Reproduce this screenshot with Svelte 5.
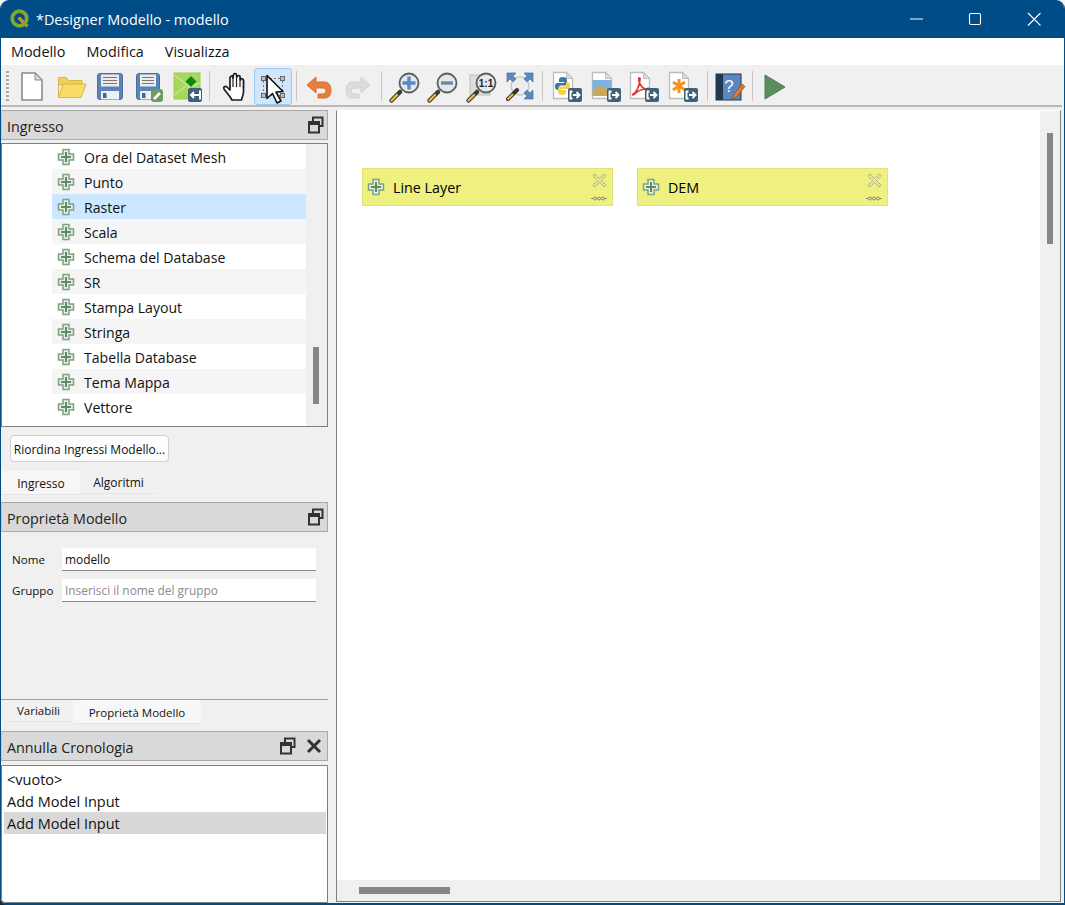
<script>
  const inputs = ['Ora del Dataset Mesh','Punto','Raster','Scala','Schema del Database','SR','Stampa Layout','Stringa','Tabella Database','Tema Mappa','Vettore'];
  const nodes = [{ name: 'Line Layer', cls: 'n1' }, { name: 'DEM', cls: 'n2' }];
</script>

{#snippet plus()}
  <svg class="plus" viewBox="0 0 18 18"><path d="M6 1.500h6v4.500h4.500v6H12v4.500H6V12H1.500V6H6z" fill="#e6eee6" stroke="#7fa283" stroke-width="1.500"/><path d="M8 4h2v4h4v2h-4v4H8v-4H4V8h4z" fill="#5b8c66"/></svg>
{/snippet}

{#snippet undock()}
  <svg class="undock" viewBox="0 0 16 18"><path d="M5 5V1.500h9.500V10H11" fill="none" stroke="#333" stroke-width="2"/><rect x="1" y="6" width="10" height="10.500" fill="none" stroke="#333" stroke-width="2"/><path d="M1 8h10" stroke="#333" stroke-width="2"/></svg>
{/snippet}

{#snippet badge()}
  <rect x="16" y="17" width="14" height="14" rx="2" fill="#3f6079"/>
  <path d="M20.500 20.500h-2v7h2M21 24h6M24.500 21l3 3-3 3" fill="none" stroke="#fff" stroke-width="1.900"/>
{/snippet}

{#snippet page()}
  <path d="M1.500 1.500h13l6 6v20h-19z" fill="#fff" stroke="#bdbdbd" stroke-width="1.300"/><path d="M14.500 1.500v6h6z" fill="#ddd" stroke="#bdbdbd"/>
{/snippet}

{#snippet disk(w)}
  <rect x="4.500" y="2.500" width={w} height="26" rx="2.500" fill="#5b84b8" stroke="#4d6f9c"/>
  <rect x="8" y="3.500" width={w - 7} height="12" fill="#ececec"/>
  <path d="M10 6.500h{w - 11}M10 9.500h{w - 11}M10 12.500h{w - 11}" stroke="#777"/>
  <rect x="8" y="20" width={w - 7} height="8.500" fill="#eef0f2"/>
  <rect x="10" y="22" width="3.500" height="5" fill="#3f6797"/>
{/snippet}

{#snippet lens(inner)}
  <path d="M12 21L3.500 29.500" stroke="#3a3a3a" stroke-width="4.500" stroke-linecap="round"/>
  <path d="M9 24L3.500 29.500" stroke="#e7bf3a" stroke-width="2.300" stroke-linecap="round"/>
  <circle cx="21" cy="12" r="9.500" fill="#e3e8ee" stroke="#5d5d5d" stroke-width="1.800"/>
  {@render inner()}
{/snippet}

{#snippet inPlus()}<path d="M21 5.500v13M14.500 12h13" stroke="#5a88c2" stroke-width="3.400"/>{/snippet}
{#snippet inMinus()}<path d="M15 12h12" stroke="#74879b" stroke-width="3.400"/>{/snippet}
{#snippet inOne()}<text x="21" y="16" class="one">1:1</text>{/snippet}

<div class="window">
  <header class="title">
    <svg class="logo" viewBox="0 0 20 20"><circle cx="9.500" cy="9.500" r="7.300" fill="none" stroke="#80a92a" stroke-width="3.800"/><path d="M9 9l8.500 8.500" stroke="#80a92a" stroke-width="3.400"/><path d="M8.500 8.500l4.500 4.500" stroke="#ee7a22" stroke-width="2.600"/></svg>
    <span class="title-text">*Designer Modello - modello</span>
    <div class="win-btns">
      <svg viewBox="0 0 59 14"><path d="M23 7h13" stroke="#fff"/></svg>
      <svg viewBox="0 0 59 14"><rect x="23.500" y="1.500" width="11" height="11" rx="1.500" fill="none" stroke="#fff" stroke-width="1.100"/></svg>
      <svg viewBox="0 0 59 14"><path d="M23 1l12.500 12.500M35.500 1L23 13.500" stroke="#fff" stroke-width="1.100"/></svg>
    </div>
  </header>

  <nav class="menu"><span>Modello</span><span>Modifica</span><span>Visualizza</span></nav>

  <div class="toolbar">
    <div class="grip"></div>
    <div class="tb"><svg viewBox="0 0 32 32"><path d="M6 2h13l7 7v20H6z" fill="#fff" stroke="#8b8b8b" stroke-width="1.600"/><path d="M19 2v7h7z" fill="#d8d8d8" stroke="#8b8b8b"/></svg></div>
    <div class="tb"><svg viewBox="0 0 32 32"><path d="M3.500 26V6.500H11l2.500 3H27V14H3.500z" fill="#f4cf58" stroke="#d9b64a"/><path d="M3.500 26.500L8 13h23l-5 13.500z" fill="#fadc68" stroke="#d9b64a"/></svg></div>
    <div class="tb"><svg viewBox="0 0 32 32">{@render disk(25)}</svg></div>
    <div class="tb"><svg viewBox="0 0 32 32">{@render disk(23)}<rect x="19" y="18" width="12" height="13" rx="3" fill="#6d9a5f"/><path d="M22 28l6-6" stroke="#fff" stroke-width="2.600"/></svg></div>
    <div class="tb"><svg viewBox="0 0 32 32"><rect x="3" y="2" width="26" height="26" fill="#a6d85c" stroke="#9bc956"/><path d="M3 4l16 12 10-4M3 24l12-9M17 15l3 13" stroke="#d9efb5" fill="none"/><path d="M20 5l5.500 5.500L20 16l-5.500-5.500z" fill="#0a8a10"/><rect x="17" y="17" width="14" height="14" rx="2" fill="#3f6079"/><path d="M28 20.500h1v7h-1M28 24h-8M23 21l-3 3 3 3" fill="none" stroke="#fff" stroke-width="1.900"/></svg></div>
    <div class="sep s1"></div>
    <div class="tb"><svg viewBox="0 0 32 32"><path d="M14 29c-2-4-6-8-8-11-1-2 1-3.500 3-2l3 3V7c0-2.500 3-2.500 3 0l.5-3c0-2 3-2 3 0l.500 2c.5-2 3-2 3 0l.5 3c.5-2 3-1.500 3 .5V21c0 3-1.500 5-2 8z" fill="#fff" stroke="#1c1c1c" stroke-width="1.700" stroke-linejoin="round"/><path d="M15 7v9M18.500 5v11M22 7v9M25.500 9v8" stroke="#1c1c1c" stroke-width="1.200"/></svg></div>
    <div class="tb on"><svg viewBox="0 0 32 32"><g fill="#bfbfbf" stroke="#666"><rect x="4.500" y="5.500" width="4" height="4"/><rect x="23.500" y="5.500" width="4" height="4"/><rect x="4.500" y="22.500" width="4" height="4"/><rect x="23.500" y="22.500" width="4" height="4"/></g><path d="M9 7.500h14M6.500 10v12M25.500 10v12M9 24.500h14" stroke="#777" stroke-dasharray="2 2"/><path d="M10 4.500l16 16-7 .5 5 9-4 2-4.500-9.500-5.500 5z" fill="#fff" stroke="#111" stroke-width="1.600" stroke-linejoin="round"/></svg></div>
    <div class="sep"></div>
    <div class="tb"><svg viewBox="0 0 32 32"><path d="M13 6l-9 8 9 8v-5h7c2 0 3 1.500 3 3s-1.500 3-3 3h-5v4h7c4 0 6-3 6-7.500S26 11 22 11h-9z" fill="#e77f3c" stroke="#d8702f"/></svg></div>
    <div class="tb"><svg viewBox="0 0 32 32"><path d="M19 6l9 8-9 8v-5h-7c-2 0-3 1.500-3 3s1.500 3 3 3h5v4h-7c-4 0-6-3-6-7.500S6 11 10 11h9z" fill="#dcdcdc" stroke="#d0d0d0"/></svg></div>
    <div class="sep s3"></div>
    <div class="tb"><svg viewBox="0 0 32 32">{@render lens(inPlus)}</svg></div>
    <div class="tb"><svg viewBox="0 0 32 32">{@render lens(inMinus)}</svg></div>
    <div class="tb"><svg viewBox="0 0 32 32"><rect x="5" y="4" width="20" height="20" fill="#ddd" stroke="#bbb"/>{@render lens(inOne)}</svg></div>
    <div class="tb"><svg viewBox="0 0 32 32"><circle cx="17" cy="15" r="9" fill="#ececec" stroke="#c8c8c8" stroke-width="1.500"/><path d="M14 19L5 28" stroke="#333" stroke-width="4" stroke-linecap="round"/><path d="M10 23L4.500 28.500" stroke="#e7bf3a" stroke-width="2.200"/><g fill="#5b8ac0" stroke="#44709f" stroke-width=".7"><path d="M4 2h9l-3 3 3 3-3 3-3-3-3 3z"/><path d="M30 2h-9l3 3-3 3 3 3 3-3 3 3z"/><path d="M30 28h-9l3-3-3-3 3-3 3 3 3-3z"/></g></svg></div>
    <div class="sep s4"></div>
    <div class="tb"><svg viewBox="0 0 32 32">{@render page()}<path d="M11 6c-3 0-4 1-4 3v2h5v1H5.500c-2 0-2.500 1.500-2.500 3.500S4 19 5.500 19H7v-2.500c0-1.500 1-2 2.500-2h3.500c1 0 2-1 2-2V9c0-2-1.500-3-4-3z" fill="#3c78ac"/><path d="M10 24c3 0 4-1 4-3v-2H9v-1h6.500c2 0 2.500-1.500 2.500-3.500S17 11 15.500 11H14v2.500c0 1.500-1 2-2.500 2H8c-1 0-2 1-2 2V21c0 2 1.500 3 4 3z" fill="#f6cf4b"/>{@render badge()}</svg></div>
    <div class="tb"><svg viewBox="0 0 32 32">{@render page()}<rect x="1.500" y="9" width="19" height="16" fill="#7fb2df"/><path d="M1.500 20l6-5 5 1 8 4v5h-19z" fill="#c9a85a"/>{@render badge()}</svg></div>
    <div class="tb"><svg viewBox="0 0 32 32">{@render page()}<path d="M3 24c4-2 7-8 8-15 .5-3-2-3-1 1 1 5 5 9 10 9 1.500 0 1-2-2-1.500-5 .5-9 2-13 6z" fill="none" stroke="#e0342b" stroke-width="1.700"/>{@render badge()}</svg></div>
    <div class="tb"><svg viewBox="0 0 32 32">{@render page()}<path d="M11 8v14M5 11l12 8M17 11L5 19" stroke="#f7931e" stroke-width="3"/>{@render badge()}</svg></div>
    <div class="sep s3"></div>
    <div class="tb"><svg viewBox="0 0 32 32"><rect x="3" y="3" width="25" height="26" fill="#5c87be" stroke="#22384d"/><rect x="3" y="3" width="7" height="26" fill="#22384d"/><text x="16" y="21" class="q">?</text><path d="M19 29l2-6 8-10 3 2.500-8 10z" fill="#e8762b" stroke="#7a4a22" stroke-width=".7"/></svg></div>
    <div class="sep s3"></div>
    <div class="tb"><svg viewBox="0 0 32 32"><path d="M6 4l20 12L6 28z" fill="#5a8f5b" stroke="#4b7d4c"/></svg></div>
  </div>

  <main class="body">
    <aside class="left">
      <div class="dock first"><span>Ingresso</span>{@render undock()}</div>
      <div class="tree">
        <div class="tree-rows">
          {#each inputs as item, i}
            <div class="row" class:alt={i % 2 === 1} class:sel={item === 'Raster'}>
              {@render plus()}<span>{item}</span>
            </div>
          {/each}
        </div>
        <div class="vtrack"><div class="tree-thumb"></div></div>
      </div>
      <button class="reorder">Riordina Ingressi Modello...</button>
      <div class="tabs t1">
        <div class="tab active w1">Ingresso</div>
        <div class="tab w2">Algoritmi</div>
      </div>
      <div class="dock second"><span>Proprietà Modello</span>{@render undock()}</div>
      <div class="form">
        <label for="nome">Nome</label><input id="nome" value="modello" />
        <label for="gruppo">Gruppo</label><input id="gruppo" placeholder="Inserisci il nome del gruppo" />
      </div>
      <div class="tabs t2">
        <div class="tab w3">Variabili</div>
        <div class="tab active w4">Proprietà Modello</div>
      </div>
      <div class="dock third"><span>Annulla Cronologia</span>{@render undock()}
        <svg class="closer" viewBox="0 0 16 16"><path d="M2 2l12 12M14 2L2 14" stroke="#333" stroke-width="3"/></svg>
      </div>
      <div class="history">
        <div class="h-row">&lt;vuoto&gt;</div>
        <div class="h-row">Add Model Input</div>
        <div class="h-row cur">Add Model Input</div>
      </div>
    </aside>

    <section class="canvas">
      <div class="paper">
        {#each nodes as n}
          <div class="node {n.cls}">
            {@render plus()}<span>{n.name}</span>
            <svg class="nx" viewBox="0 0 16 16"><path d="M3 1l5 5 5-5 2 2-5 5 5 5-2 2-5-5-5 5-2-2 5-5-5-5z" fill="#e4e6a0" stroke="#8f8f6a" stroke-dasharray="1.500 .8"/></svg>
            <svg class="nd" viewBox="0 0 16 5"><path d="M0 2.500h16" stroke="#8e8e62"/><circle cx="4" cy="2.500" r="1.500" fill="#e4e6a0" stroke="#8e8e62"/><circle cx="8" cy="2.500" r="1.500" fill="#e4e6a0" stroke="#8e8e62"/><circle cx="12" cy="2.500" r="1.500" fill="#e4e6a0" stroke="#8e8e62"/></svg>
          </div>
        {/each}
      </div>
      <div class="vbar"><div class="vthumb"></div></div>
      <div class="hbar"><div class="hthumb"></div></div>
      <div class="cornerbox"></div>
    </section>
  </main>
</div>

<style>
  :global(body) { margin: 0; background: linear-gradient(#f4f4f4 50%, #222 50%); }
  * { box-sizing: border-box; }
  .window {
    width: 1065px; height: 905px; display: flex; flex-direction: column;
    background: #f0f0f0; border: 1px solid #004c87; border-top: 0; border-bottom-width: 2px;
    border-radius: 9px 9px 0 6px; overflow: hidden;
    font-family: "Open Sans", "Noto Sans", sans-serif; font-size: 14px; color: #111;
  }
  .title { height: 38px; background: #004c87; color: #fff; display: flex; align-items: center; padding-left: 9px; flex: none; }
  .logo { width: 20px; height: 20px; flex: none; }
  .title-text { margin-left: 6px; font-size: 14.400px; flex: 1; }
  .win-btns { display: flex; }
  .win-btns svg { width: 59px; height: 14px; display: block; }
  .menu { height: 27px; background: #fff; display: flex; align-items: center; padding-left: 10px; gap: 21px; flex: none; font-size: 14.400px; }
  .toolbar { height: 42px; display: flex; align-items: center; padding: 2px 0 0 5px; border-bottom: 2px solid #b9b9b9; flex: none; margin-right: 2px; }
  .grip { width: 3px; height: 30px; margin-right: 4px; background: repeating-linear-gradient(#a8a8a8 0 2px, transparent 2px 4px); }
  .tb { width: 38.600px; height: 37px; display: flex; align-items: center; justify-content: center; border: 1px solid transparent; border-radius: 3px; padding-top: 1px; }
  .tb svg { width: 32px; height: 32px; overflow: visible; display: block; }
  .tb.on { background: #cfe6fb; border-color: #9cc9ef; }
  .sep { width: 1px; height: 30px; background: #c9c9c9; margin: 0 3.500px; flex: none; }
  .s1 { margin-right: 4.500px; }
  .s3 { margin-right: 2.500px; }
  .s4 { margin-right: 5.500px; }
  .one { font: bold 10px "Liberation Sans", sans-serif; text-anchor: middle; fill: #222; }
  .q { font: 17px "Liberation Sans", sans-serif; text-anchor: middle; fill: #fff; }

  .body { flex: 1; display: flex; min-height: 0; }
  .left { width: 327px; flex: none; display: flex; flex-direction: column; }
  .dock { height: 30px; flex: none; display: flex; align-items: center; padding: 0 3px 0 5px; background: #d9d9d9; border: 1px solid #a9a9a9; border-left-color: #c8c8c8; font-size: 14.300px; color: #222; }
  .dock span { flex: 1; padding-top: 2px; }
  .dock.first { margin-top: 3px; }
  .dock.second { margin-top: 7px; }
  .dock.third { margin-top: 7px; padding-right: 5px; }
  .undock { width: 16px; height: 18px; display: block; }
  .closer { width: 16px; height: 16px; margin-left: 10px; }
  .tree { height: 284px; flex: none; margin-top: 3px; background: #fff; border: 1px solid #808080; display: flex; }
  .tree-rows { flex: 1; padding: 0 0 0 50px; }
  .row { height: 25px; display: flex; align-items: center; padding-left: 5px; font-size: 14.100px; }
  .row span { padding-top: 2px; }
  .row.alt { background: #f5f5f5; }
  .row.sel { background: #cce7ff; }
  .plus { width: 18px; height: 18px; flex: none; margin-right: 9px; }
  .vtrack { width: 21px; background: #f0f0f0; padding: 203px 0 0 7px; }
  .tree-thumb { width: 6px; height: 57px; background: #868686; }
  .reorder { align-self: flex-start; flex: none; margin: 8px 0 0 9px; width: 159px; height: 27px; padding: 1px 0 0; background: #fdfdfd; border: 1px solid #d0d0d0; border-radius: 4px; font: 12px "Open Sans", "Noto Sans", sans-serif; color: #111; }
  .tabs { display: flex; flex: none; }
  .t1 { margin-top: 9px; height: 24px; padding-left: 1px; gap: 1px; align-items: flex-start; font-size: 12px; }
  .t2 { height: 25px; border-top: 1px solid #a0a0a0; padding-left: 3px; align-items: flex-start; font-size: 11.500px; }
  .tab { display: flex; align-items: center; justify-content: center; height: 22px; background: #f1f1f1; border-bottom: 1px solid #e4e4e4; }
  .tab.active { height: 24px; background: #f7f7f7; padding-top: 1px; }
  .w1 { width: 78px; }
  .w2 { width: 75px; margin-top: 1px; }
  .w3 { width: 69px; padding-bottom: 1px; }
  .w4 { width: 128px; }
  .form { flex: 1; display: grid; grid-template-columns: 50px 254px; grid-auto-rows: 23px; row-gap: 8px; padding: 16px 0 0 11px; align-items: center; align-content: start; font-size: 11.600px; }
  .form input { height: 23px; width: 254px; border: 0; border-bottom: 1px solid #8a8a8a; background: #fff; padding: 0 3px; font: 11.900px "Open Sans", "Noto Sans", sans-serif; color: #111; outline: 0; }
  .form input::placeholder { color: #8b8b8b; opacity: 1; }
  .history { margin-top: 4px; height: 138px; flex: none; background: #fff; border: 1px solid #808080; padding: 2px 1px; font-size: 14.500px; border-radius: 0 0 0 4px; }
  .h-row { height: 22px; line-height: 23px; padding-left: 4px; }
  .h-row.cur { background: #d8d8d8; margin-left: 1px; padding-left: 3px; }

  .canvas { position: relative; margin: 3px 3px 1px 8px; flex: 1; display: grid; grid-template-columns: 1fr 20px; grid-template-rows: 1fr 21px; border: 1px solid #808080; border-top: 1px solid #fff; }
  .paper { background: #fff; position: relative; }
  .node { position: absolute; top: 57px; width: 251px; height: 38px; background: #eef080; border: 1px solid #e2e278; display: flex; align-items: center; padding-left: 4px; font-size: 14.300px; color: #000; }
  .n1 { left: 25px; } .n2 { left: 300px; }
  .node .plus { margin-right: 8px; }
  .nx { position: absolute; right: 5px; top: 4px; width: 15px; height: 15px; }
  .nd { position: absolute; right: 5px; top: 27px; width: 16px; height: 5px; }
  .vbar { background: #f0f0f0; padding: 22px 0 0 7px; }
  .vthumb { width: 6px; height: 111px; background: #868686; }
  .hbar { background: #f0f0f0; padding: 7px 0 0 22px; }
  .hthumb { width: 91px; height: 7px; background: #868686; }
  .cornerbox { background: #f0f0f0; }
</style>
